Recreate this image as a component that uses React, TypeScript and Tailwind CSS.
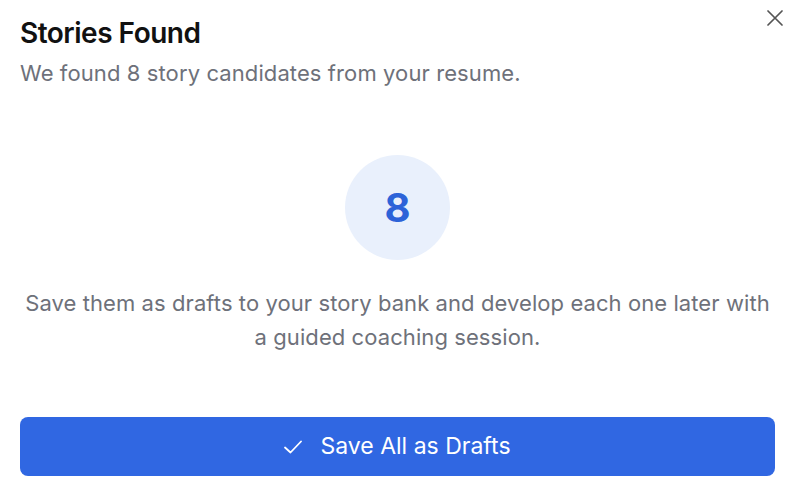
import React from "react";

export default function App() {
  return (
    <div className="w-[800px] h-[491px] bg-white relative flex flex-col pl-5 pr-[25px]" style={{ fontFamily: "Inter, 'Noto Sans', sans-serif" }}>
      <button className="absolute left-[767px] top-[10px] text-[#555]" aria-label="Close">
        <svg width="16" height="16" viewBox="0 0 16 16" fill="none" stroke="currentColor" strokeWidth="1.7" strokeLinecap="round">
          <path d="M1 1L15 15M15 1L1 15" />
        </svg>
      </button>
      <h1 className="mt-[16px] text-[28px] leading-[34px] font-semibold text-[#111] tracking-[-0.5px]">Stories Found</h1>
      <p className="mt-[9px] text-[22px] leading-[28px] text-[#6e717a] tracking-[0.1px]">We found 8 story candidates from your resume.</p>
      <div className="mt-[68px] flex justify-center">
        <div className="w-[105px] h-[105px] rounded-full bg-[#e9f0fc] flex items-center justify-center">
          <span className="text-[40px] leading-none font-bold text-[#2d63d8]">8</span>
        </div>
      </div>
      <p className="mt-[26px] text-[22px] leading-[34px] text-[#6e717a] text-center tracking-[0.08px]">
        Save them as drafts to your story bank and develop each one later with a guided coaching session.
      </p>
      <button className="mt-[63px] h-[59px] w-full rounded-[8px] bg-[#3067e2] text-white flex items-center justify-center gap-[18px] text-[23px]">
        <svg width="18" height="14" viewBox="0 0 18 14" fill="none" stroke="currentColor" strokeWidth="1.8" strokeLinecap="round" strokeLinejoin="round">
          <path d="M1 7.5L6.5 12.5L17 1.5" />
        </svg>
        <span>Save All as Drafts</span>
      </button>
    </div>
  );
}
